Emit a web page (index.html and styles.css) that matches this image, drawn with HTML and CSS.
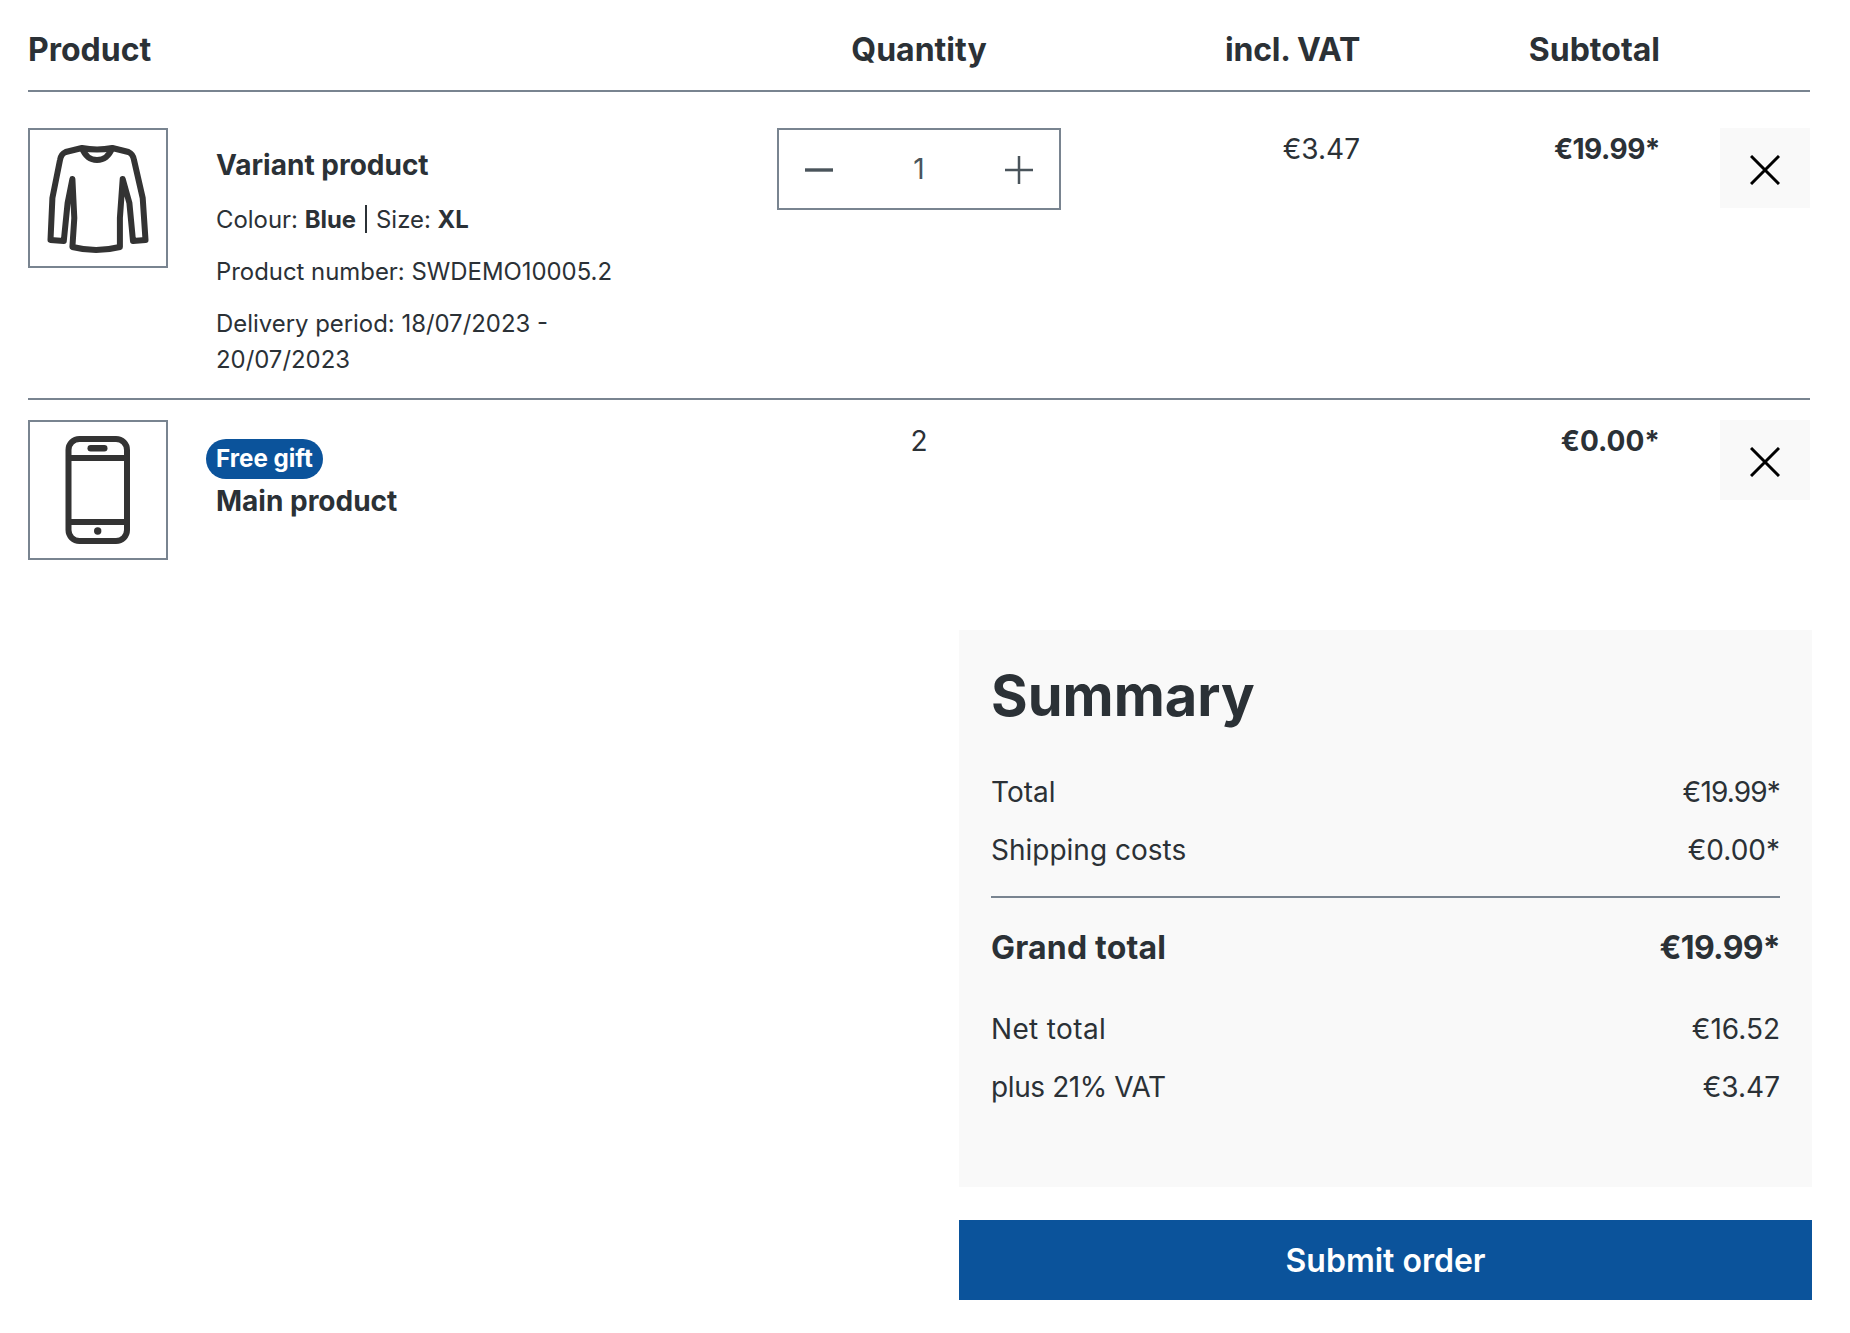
FILE: index.html
```html
<!DOCTYPE html>
<html lang="en">
<head>
<meta charset="utf-8">
<title>Checkout</title>
<link rel="stylesheet" href="styles.css">
</head>
<body>
<main class="page">
  <div class="grid head">
    <div>Product</div>
    <div class="center">Quantity</div>
    <div class="right vat-head">incl. VAT</div>
    <div class="right">Subtotal</div>
    <div></div>
  </div>
  <div class="grid row row-first">
    <div class="product">
      <div class="thumb">
        <svg viewBox="0 0 136 136" width="136" height="136"><path class="ink" d="M51.900 18 L35.700 22 Q31 24 30 30 L22.400 68 L20.500 110 L33.800 111 L37.600 73 L42.400 49 L44.300 88 L42.400 117 Q66 123 89.900 117 L89.900 88 L92.700 49 L99.400 73 L103 111 L115.500 110 L112.700 68 L104 30 Q103 24 98.400 22 L82.300 18 Q67 21 51.900 18 Q56.600 30 67 30 Q77.500 30 82.300 18"/></svg>
      </div>
      <div class="info">
        <div class="name name-first">Variant product</div>
        <div class="meta">Colour: <b>Blue</b><span class="sep"></span>Size: <b>XL</b></div>
        <div class="meta">Product number: SWDEMO10005.2</div>
        <div class="meta wrap">Delivery period: 18/07/2023 - 20/07/2023</div>
      </div>
    </div>
    <div class="qty">
      <svg viewBox="0 0 28 28" width="28" height="28"><path class="op thick" d="M0 14H28"/></svg>
      <span>1</span>
      <svg viewBox="0 0 28 28" width="28" height="28"><path class="op" d="M0 14H28M14 0V28"/></svg>
    </div>
    <div class="right cell">€3.47</div>
    <div class="right cell strong tight-b">€19.99*</div>
    <button class="remove" type="button" aria-label="Remove"><svg viewBox="0 0 30 30" width="30" height="30"><path class="cross" d="M1 1L29 29M29 1L1 29"/></svg></button>
  </div>
  <div class="grid row row-second">
    <div class="product">
      <div class="thumb">
        <svg viewBox="0 0 136 136" width="136" height="136"><rect class="ink" x="38.500" y="17" width="58.500" height="102" rx="11"/><path class="ink" d="M39 36H96M39 100H96"/><rect class="fill" x="57.500" y="23" width="20" height="6.500" rx="3.200"/><circle class="fill" cx="67.700" cy="109" r="3.700"/></svg>
      </div>
      <div class="info">
        <span class="badge">Free gift</span>
        <div class="name">Main product</div>
      </div>
    </div>
    <div class="center cell">2</div>
    <div></div>
    <div class="right cell strong">€0.00*</div>
    <button class="remove" type="button" aria-label="Remove"><svg viewBox="0 0 30 30" width="30" height="30"><path class="cross" d="M1 1L29 29M29 1L1 29"/></svg></button>
  </div>
  <aside class="side">
    <section class="summary">
      <h2>Summary</h2>
      <dl class="lines lines-top">
        <div><dt>Total</dt><dd class="tight">€19.99*</dd></div>
        <div><dt>Shipping costs</dt><dd>€0.00*</dd></div>
      </dl>
      <div class="grand"><span class="wide-g">Grand total</span><span class="tight-g">€19.99*</span></div>
      <dl class="lines">
        <div><dt class="wide-n">Net total</dt><dd>€16.52</dd></div>
        <div><dt class="tight-v">plus 21% VAT</dt><dd>€3.47</dd></div>
      </dl>
    </section>
    <button class="submit" type="button">Submit order</button>
  </aside>
</main>
</body>
</html>
```
FILE: styles.css
```css
* { box-sizing: border-box; }
html, body { margin: 0; background: #fff; }
body { font-family: Inter, "Noto Sans", sans-serif; color: #2b3136; font-size: 23.9px; line-height: 36px; }
.page { padding: 0 40px 33px 28px; }
.grid { display: grid; grid-template-columns: 749px 284px 299px 300px 150px; }
.head { font-size: 32px; font-weight: 700; height: 92px; padding-top: 30px; line-height: 40px; border-bottom: 2px solid #798490; }
.vat-head { letter-spacing: -0.25px; }
.center { text-align: center; }
.right { text-align: right; }
.row-first { padding-top: 36px; height: 308px; border-bottom: 2px solid #798490; }
.row-second { padding-top: 20px; height: 230px; }
.product { display: flex; gap: 48px; }
.thumb { width: 140px; height: 140px; border: 2px solid #798490; flex: none; }
.thumb svg { display: block; }
.ink { fill: none; stroke: #333; stroke-width: 6; stroke-linejoin: round; stroke-linecap: round; }
.fill { fill: #333; }
.info { max-width: 420px; }
.name { font-size: 28px; font-weight: 700; line-height: 40px; }
.name-first { margin-top: 17px; margin-bottom: 17px; }
.meta { margin-bottom: 16px; }
.meta b { font-weight: 700; }
.sep { display: inline-block; width: 2px; height: 28px; background: #2b3136; margin: 0 9px; vertical-align: -5px; }
.badge { display: block; width: fit-content; margin: 19px 0 0 -10px; padding: 0 10px; height: 40px; line-height: 40px; border-radius: 20px; background: #0b539b; color: #fff; font-weight: 700; font-size: 24.2px; }
.row-second .name { margin-top: 2px; }
.qty { height: 82px; border: 2px solid #798490; display: flex; align-items: center; justify-content: space-between; padding: 0 26px; font-size: 28px; color: #4a545b; }
.qty svg { position: relative; top: 1px; }
.op { fill: none; stroke: #4a545b; stroke-width: 2.5; }
.thick { stroke-width: 3.4; }
.cell { font-size: 28px; line-height: 40px; padding-top: 1px; }
.strong { font-weight: 700; }
.tight-b { letter-spacing: -0.5px; }
.remove { justify-self: end; width: 90px; height: 80px; border: 0; padding: 4px 0 0; background: #f9f9f9; display: flex; align-items: center; justify-content: center; }
.cross { fill: none; stroke: #000; stroke-width: 3; }
.side { width: 853px; margin: 0 -2px 0 auto; }
.summary { background: #f9f9f9; height: 557px; padding: 34px 32px; }
h2 { margin: 0 0 44px; font-size: 56px; line-height: 64px; font-weight: 700; }
.lines { margin: 0; font-size: 28px; }
.lines-top { margin-bottom: 8px; }
.lines > div { display: flex; justify-content: space-between; height: 58px; line-height: 40px; }
.lines dt, .lines dd { margin: 0; }
.tight { letter-spacing: -0.85px; }
.tight-g { letter-spacing: -0.7px; }
.tight-v { letter-spacing: -0.4px; }
.wide-g { letter-spacing: 0.2px; }
.wide-n { letter-spacing: 0.35px; }
.grand { display: flex; justify-content: space-between; font-size: 32px; font-weight: 700; line-height: 40px; border-top: 2px solid #798490; padding-top: 30px; margin-bottom: 41px; }
.submit { display: block; width: 100%; height: 80px; margin-top: 33px; border: 0; background: #0b539b; color: #fff; font: 600 32px Inter, "Noto Sans", sans-serif; }
```
